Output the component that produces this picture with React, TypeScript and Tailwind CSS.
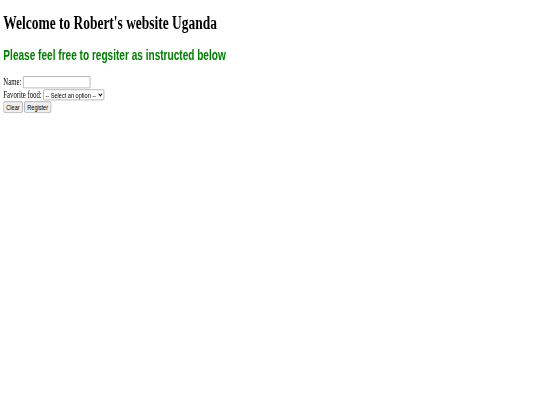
export default function App() {
  return (
    <div className="h-[405px] w-[540px] overflow-hidden bg-white">
      <div className="w-[1280px] origin-top-left [transform:scale(0.42,0.6)] px-2 font-['Liberation_Serif',serif] text-base text-black">
        <h1 className="mt-[12px] mb-[21.44px] text-[32px] leading-[1.15] font-bold">
          Welcome to Robert's website Uganda
        </h1>
        <h2 className="mt-[19.92px] mb-[21px] font-['Liberation_Sans',Arial,sans-serif] text-[24px] leading-[1.15] font-bold text-[#008000]">
          Please feel free to regsiter as instructed below
        </h2>
        <form
          onSubmit={(e) => e.preventDefault()}
          className="flex flex-col items-start gap-[2px] leading-[18px]"
        >
          <div className="flex items-center gap-[4px]">
            <label htmlFor="name">Name:</label>
            <input
              id="name"
              type="text"
              className="h-[20px] w-[160px] rounded-[2px] border border-[#767676] bg-white px-[2px] font-['Liberation_Sans',Arial,sans-serif] text-[13.33px]"
            />
          </div>
          <div className="flex items-center gap-[4px]">
            <label htmlFor="food">Favorite food:</label>
            <select
              id="food"
              defaultValue=""
              className="h-[18px] w-[145px] rounded-[3px] border border-[#767676] bg-white font-['Liberation_Sans',Arial,sans-serif] text-[13.33px]"
            >
              <option value="">-- Select an option --</option>
              <option value="matooke">Matooke</option>
              <option value="rolex">Rolex</option>
            </select>
          </div>
          <div className="flex items-center gap-[4px]">
            <button
              type="reset"
              className="h-[19px] rounded-[3px] border border-[#767676] bg-[#efefef] px-[6px] font-['Liberation_Sans',Arial,sans-serif] text-[13.33px]"
            >
              Clear
            </button>
            <button
              type="submit"
              className="h-[19px] rounded-[3px] border border-[#767676] bg-[#efefef] px-[6px] font-['Liberation_Sans',Arial,sans-serif] text-[13.33px]"
            >
              Register
            </button>
          </div>
        </form>
      </div>
    </div>
  );
}
